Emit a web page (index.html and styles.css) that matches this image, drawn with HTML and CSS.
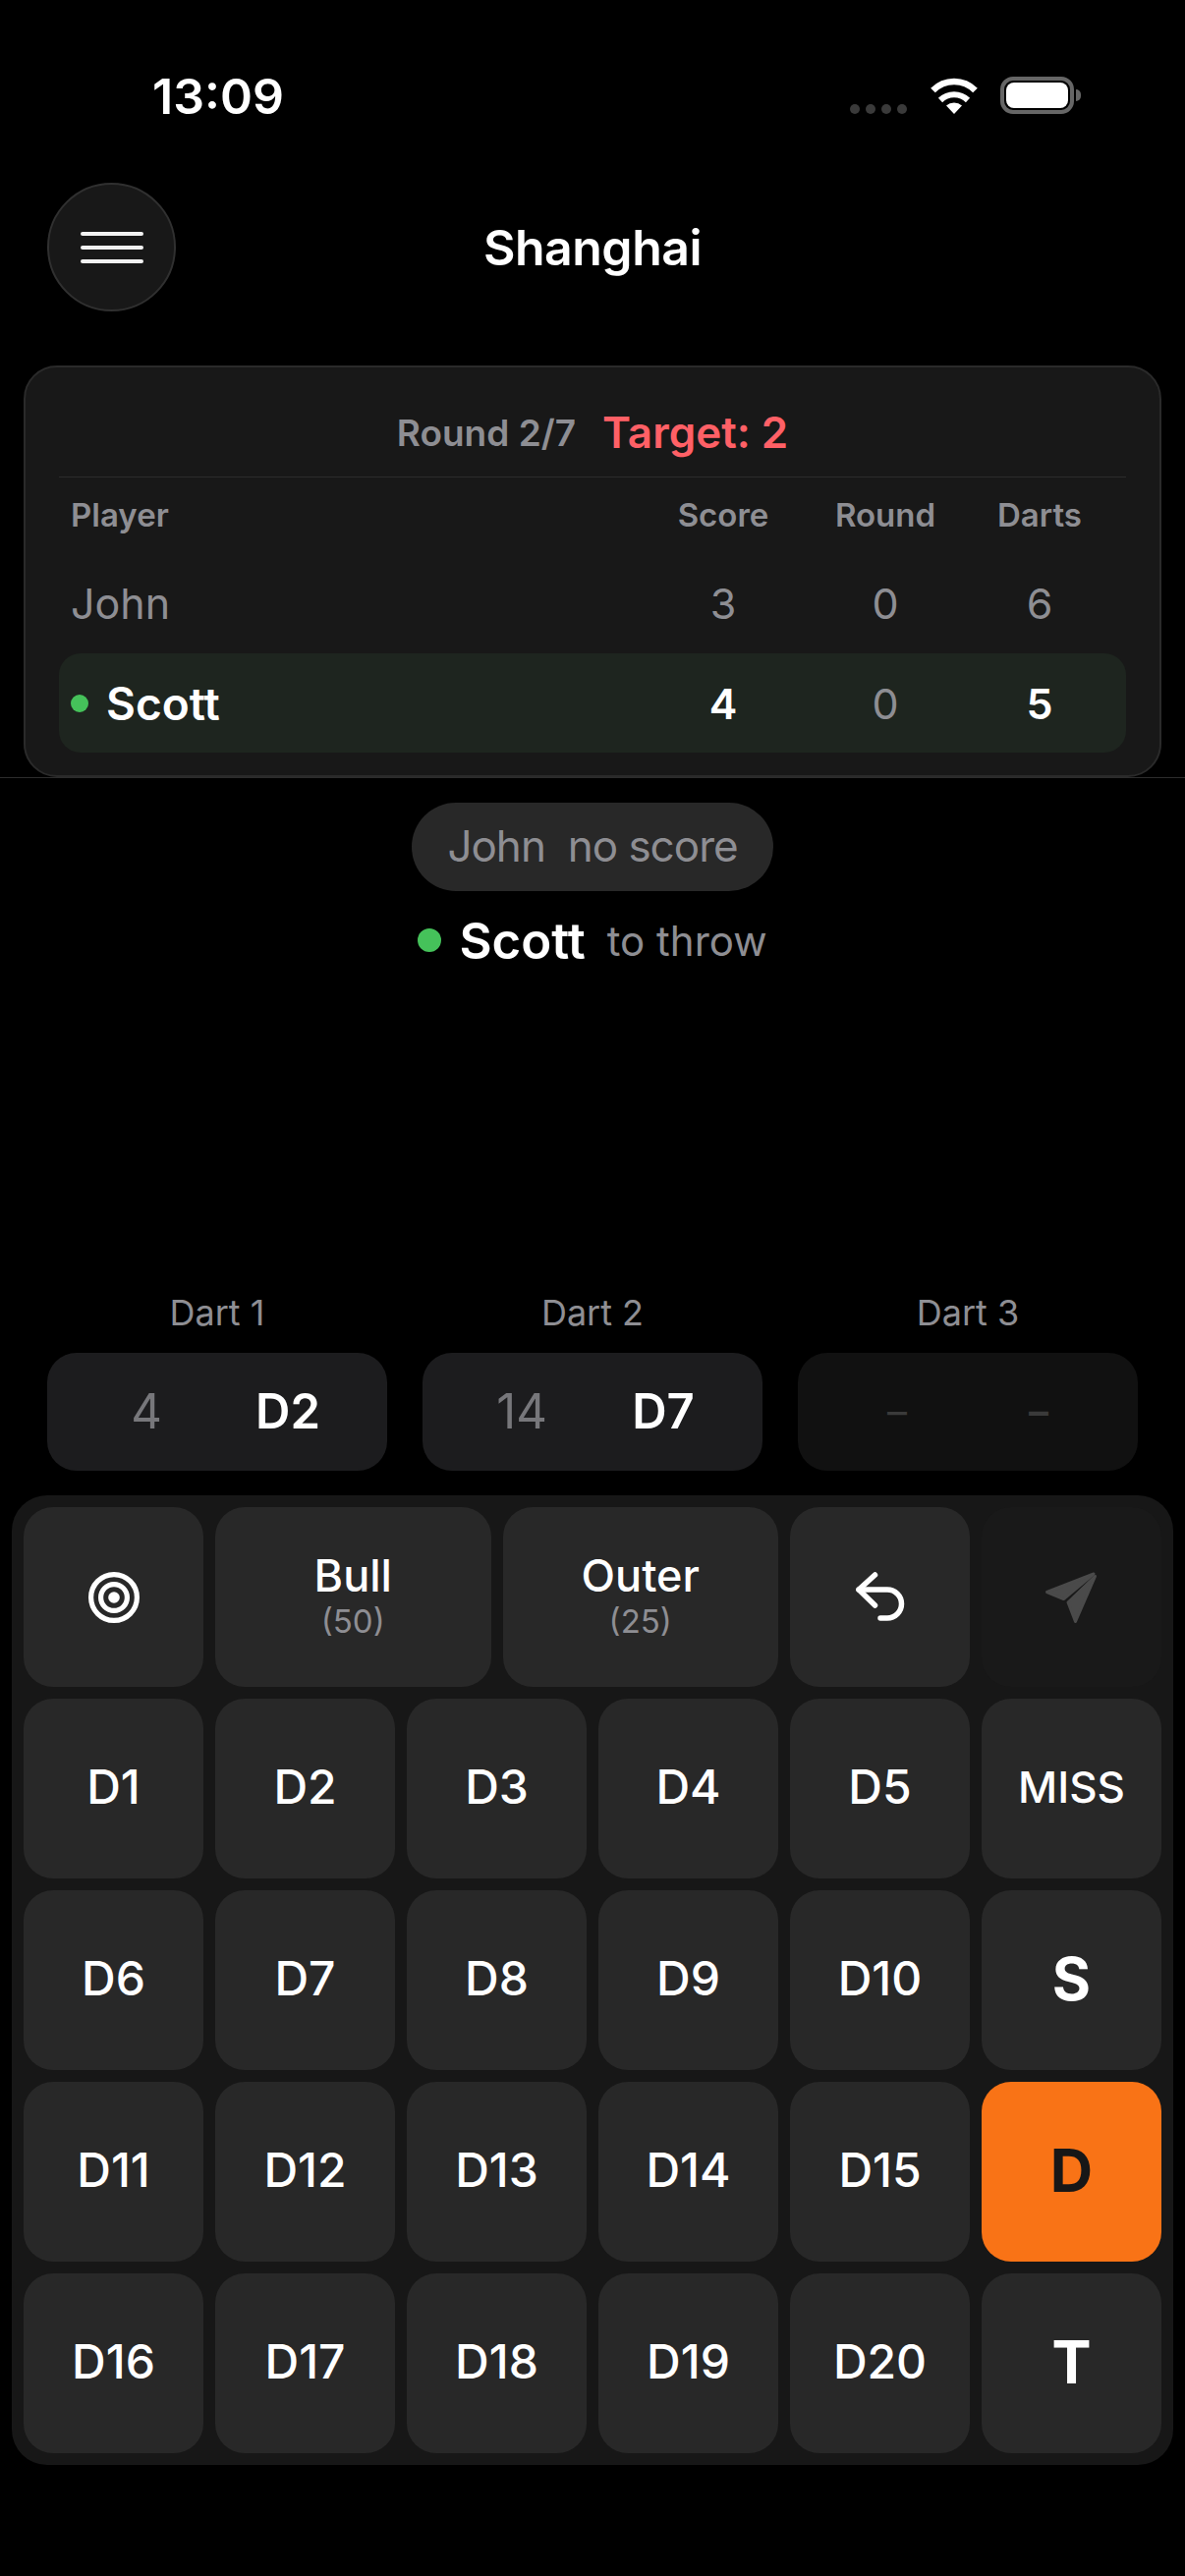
FILE: index.html
```html
<!DOCTYPE html>
<html lang="en">
<head>
    <meta charset="UTF-8">
    <meta name="viewport" content="width=device-width, initial-scale=1.0">
    <title>Shanghai</title>
    <link rel="stylesheet" href="styles.css">
</head>
<body>

<div class="status-bar">
    <span class="clock">13:09</span>
    <div class="status-icons">
        <div class="signal"><i></i><i></i><i></i><i></i></div>
        <svg class="wifi" width="50" height="37" viewBox="0 0 50 37">
            <path d="M3.500 13 A30 30 0 0 1 46.500 13" fill="none" stroke="#fff" stroke-width="6.500"/>
            <path d="M11 23 A20 20 0 0 1 39 23" fill="none" stroke="#fff" stroke-width="6"/>
            <path d="M25 37 L17 28.500 A12 12 0 0 1 33 28.500 Z" fill="#fff"/>
        </svg>
        <div class="battery"><div class="battery-fill"></div></div>
        <div class="battery-tip"></div>
    </div>
</div>

<div class="topbar">
    <button class="menu-button">
        <span></span><span></span><span></span>
    </button>
    <h1 class="title">Shanghai</h1>
</div>

<div class="score-section">
    <div class="score-card">
        <div class="score-header">
            <span class="round-label">Round 2/7</span>
            <span class="target-label">Target: 2</span>
        </div>
        <div class="score-row head-row">
            <div class="name">Player</div>
            <div>Score</div>
            <div>Round</div>
            <div>Darts</div>
        </div>
        <div class="score-row john-row">
            <div class="name">John</div>
            <div>3</div>
            <div>0</div>
            <div>6</div>
        </div>
        <div class="score-row active-row">
            <div class="name"><span class="dot small"></span>Scott</div>
            <div>4</div>
            <div class="dim">0</div>
            <div>5</div>
        </div>
    </div>
</div>

<div class="turn-info">
    <div class="pill">John&nbsp; no score</div>
    <div class="turn-line">
        <span class="dot"></span>
        <strong>Scott</strong>
        <span class="turn-text">to throw</span>
    </div>
</div>

<div class="darts">
    <div class="dart">
        <div class="dart-label">Dart 1</div>
        <div class="dart-box"><span class="dart-num">4</span><span class="dart-val">D2</span></div>
    </div>
    <div class="dart">
        <div class="dart-label">Dart 2</div>
        <div class="dart-box"><span class="dart-num">14</span><span class="dart-val">D7</span></div>
    </div>
    <div class="dart">
        <div class="dart-label">Dart 3</div>
        <div class="dart-box empty"><span class="dart-num">–</span><span class="dart-val">–</span></div>
    </div>
</div>

<div class="pad">
    <button class="key">
        <svg width="52" height="52" viewBox="0 0 52 52" fill="none" stroke="#fff" stroke-width="5.200">
            <circle cx="26" cy="26" r="23.400"/>
            <circle cx="26" cy="26" r="13.400"/>
            <circle cx="26" cy="26" r="5.800" fill="#fff" stroke="none"/>
        </svg>
    </button>
    <div class="bull-keys">
        <button class="key stacked">Bull<small>(50)</small></button>
        <button class="key stacked">Outer<small>(25)</small></button>
    </div>
    <button class="key">
        <svg width="60" height="60" viewBox="0 0 60 60" fill="none" stroke="#fff" stroke-width="5.500" stroke-linecap="round" stroke-linejoin="round">
            <path d="M24.500 7 L8 22 L24.500 38"/>
            <path d="M8 22 H37 a14.500 14.500 0 0 1 0 29 H30"/>
        </svg>
    </button>
    <button class="key disabled">
        <svg width="60" height="60" viewBox="0 0 60 60" fill="#4a4a4a" stroke="#4a4a4a" stroke-width="3" stroke-linejoin="round">
            <path d="M52 6 L4.500 24.500 L21.500 31.500 Z"/>
            <path d="M53.500 8.500 L26 35 L33.500 54.500 Z"/>
        </svg>
    </button>

    <button class="key label">D1</button>
    <button class="key label">D2</button>
    <button class="key label">D3</button>
    <button class="key label">D4</button>
    <button class="key label">D5</button>
    <button class="key label miss">MISS</button>

    <button class="key label">D6</button>
    <button class="key label">D7</button>
    <button class="key label">D8</button>
    <button class="key label">D9</button>
    <button class="key label">D10</button>
    <button class="key label mult">S</button>

    <button class="key label">D11</button>
    <button class="key label">D12</button>
    <button class="key label">D13</button>
    <button class="key label">D14</button>
    <button class="key label">D15</button>
    <button class="key label mult selected">D</button>

    <button class="key label">D16</button>
    <button class="key label">D17</button>
    <button class="key label">D18</button>
    <button class="key label">D19</button>
    <button class="key label">D20</button>
    <button class="key label mult">T</button>
</div>

</body>
</html>
```

FILE: styles.css
```css
* {
    box-sizing: border-box;
}
body {
    margin: 0;
    width: 1206px;
    height: 2622px;
    overflow: hidden;
    background-color: #000;
    color: #fff;
    font-family: Inter, "Liberation Sans", sans-serif;
}
button {
    font-family: inherit;
    border: none;
    padding: 0;
}

/* Barra de estado */
.status-bar {
    height: 186px;
    padding: 72px 106px 0 155px;
    display: flex;
    justify-content: space-between;
    align-items: flex-start;
}
.clock {
    font-size: 50px;
    line-height: 52px;
    font-weight: 600;
}
.status-icons {
    display: flex;
    align-items: flex-start;
    padding-top: 6px;
}
.signal {
    display: flex;
    gap: 6px;
    margin-top: 28px;
    margin-right: 23px;
}
.signal i {
    width: 10px;
    height: 10px;
    border-radius: 50%;
    background-color: #3a3a3a;
}
.wifi {
    margin-top: 1px;
    margin-right: 22px;
}
.battery {
    width: 75px;
    height: 38px;
    border: 4px solid #666;
    border-radius: 13px;
    padding: 2px;
}
.battery-fill {
    height: 100%;
    background-color: #fff;
    border-radius: 8px;
}
.battery-tip {
    width: 5px;
    height: 12px;
    margin: 13px 0 0 2px;
    background-color: #666;
    border-radius: 0 6px 6px 0;
}

/* Cabecera */
.topbar {
    height: 131px;
    margin: 0 48px 55px;
    display: grid;
    grid-template-columns: 131px 1fr 131px;
    align-items: center;
}
.menu-button {
    width: 131px;
    height: 131px;
    border-radius: 50%;
    background-color: #181818;
    border: 2px solid #303030;
    display: flex;
    flex-direction: column;
    align-items: center;
    justify-content: center;
    gap: 10px;
}
.menu-button span {
    width: 64px;
    height: 4px;
    background-color: #f2f2f2;
    border-radius: 2px;
}
.title {
    margin: 0;
    text-align: center;
    font-size: 50px;
    font-weight: 600;
    letter-spacing: -0.5px;
}

/* Marcador */
.score-section {
    padding: 0 24px;
    border-bottom: 1px solid #2c2c2c;
}
.score-card {
    height: 419px;
    padding: 0 34px;
    background-color: #181818;
    border: 2px solid #2a2a2a;
    border-radius: 34px;
}
.score-header {
    height: 112px;
    padding-top: 21px;
    display: flex;
    align-items: center;
    justify-content: center;
    gap: 27px;
    border-bottom: 1px solid #2c2c2c;
}
.round-label {
    font-size: 37px;
    font-weight: 600;
    color: #8e8e93;
}
.target-label {
    font-size: 44px;
    font-weight: 600;
    color: #ff6066;
}
.score-row {
    display: grid;
    grid-template-columns: 1fr 168px 162px 152px;
    align-items: center;
    padding: 0 12px;
    text-align: center;
    font-size: 43px;
    color: #8e8e93;
}
.score-row .name {
    display: flex;
    align-items: center;
    text-align: left;
}
.head-row {
    height: 76px;
    font-size: 33px;
    font-weight: 600;
}
.john-row {
    height: 103px;
}
.active-row {
    height: 101px;
    background-color: #1e251f;
    border-radius: 22px;
    color: #fff;
    font-weight: 600;
}
.active-row .name {
    font-size: 46px;
}
.active-row .dim {
    color: #8e8e93;
    font-weight: 400;
}
.dot {
    display: inline-block;
    width: 24px;
    height: 24px;
    border-radius: 50%;
    background-color: #45c25a;
}
.dot.small {
    width: 18px;
    height: 18px;
    margin-right: 18px;
}

/* Turno */
.turn-info {
    display: flex;
    flex-direction: column;
    align-items: center;
    padding-top: 25px;
}
.pill {
    height: 90px;
    line-height: 88px;
    padding: 0 36px;
    border-radius: 45px;
    background-color: #282828;
    font-size: 44px;
    letter-spacing: -1px;
    color: #8e8e93;
}
.turn-line {
    margin-top: 19px;
    height: 62px;
    display: flex;
    align-items: center;
}
.turn-line .dot {
    margin-right: 18px;
}
.turn-line strong {
    margin-right: 22px;
    font-size: 51px;
    font-weight: 600;
}
.turn-text {
    font-size: 42px;
    color: #8e8e93;
}

/* Dardos */
.darts {
    margin-top: 329px;
    padding: 0 48px;
    display: grid;
    grid-template-columns: repeat(3, 1fr);
    gap: 36px;
}
.dart-label {
    height: 40px;
    line-height: 38px;
    margin-bottom: 20px;
    text-align: center;
    font-size: 36px;
    color: #8e8e93;
}
.dart-box {
    height: 120px;
    padding: 0 0 2px;
    border-radius: 30px;
    background-color: #1c1c1e;
    display: grid;
    grid-template-columns: 144px 144px;
    justify-content: center;
    align-items: center;
    text-align: center;
    font-size: 49px;
}
.dart-num {
    color: #77777b;
}
.dart-val {
    font-weight: 600;
}
.dart-box.empty {
    background-color: #111;
    font-size: 40px;
}
.dart-box.empty .dart-num,
.dart-box.empty .dart-val {
    color: #3a3a3a;
}

/* Teclado */
.pad {
    margin: 25px 12px 0;
    padding: 12px;
    background-color: #171717;
    border-radius: 36px;
    display: grid;
    grid-template-columns: repeat(6, 183px);
    grid-auto-rows: 183px;
    gap: 12px;
}
.bull-keys {
    grid-column: span 3;
    display: grid;
    grid-template-columns: 1fr 1fr;
    gap: 12px;
}
.key {
    background-color: #282828;
    border-radius: 30px;
    color: #fff;
    font-weight: 550;
    display: flex;
    flex-direction: column;
    align-items: center;
    justify-content: center;
}
.key.label {
    padding-bottom: 4px;
    font-size: 48px;
}
.key.stacked {
    font-size: 45px;
    line-height: 48px;
}
.key small {
    font-size: 33px;
    font-weight: 400;
    line-height: 44px;
    color: #8e8e93;
}
.key.disabled {
    background-color: #191919;
}
.key.label.miss {
    font-size: 44px;
}
.key.label.mult {
    font-size: 60px;
    font-weight: 700;
}
.key.selected {
    background-color: #f97316;
    color: #171717;
}
```
